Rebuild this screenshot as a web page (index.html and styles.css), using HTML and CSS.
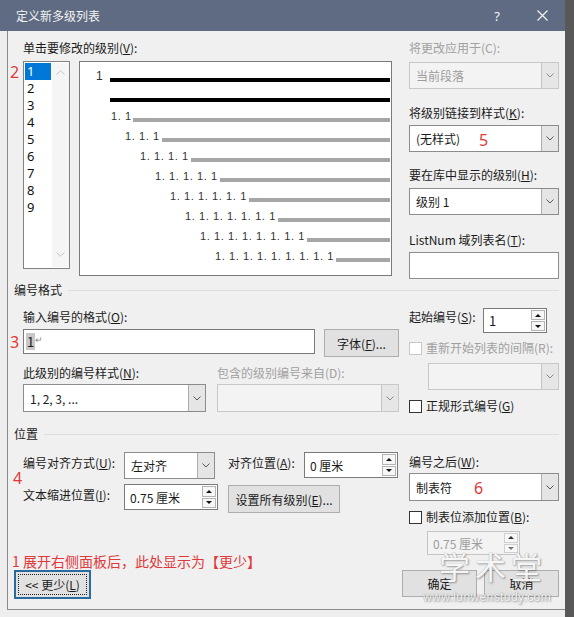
FILE: index.html
```html
<!DOCTYPE html>
<html lang="zh">
<head>
<meta charset="utf-8">
<title>定义新多级列表</title>
<link rel="stylesheet" href="styles.css">
</head>
<body>
<div class="screen">
  <div class="dialog">
    <div class="titlebar">
      <span class="title">定义新多级列表</span>
      <span class="help">?</span>
      <span class="close"><svg width="11" height="11" viewBox="0 0 11 11"><path d="M0.5 0.5 L10.5 10.5 M10.5 0.5 L0.5 10.5" stroke="#f4f4f4" stroke-width="1.2" fill="none"/></svg></span>
    </div>
    <div class="body">
      <div class="cols top">
        <div class="lcol">
          <div class="lbl">单击要修改的级别(<u>V</u>):</div>
          <div class="toprow">
            <div class="levels">
              <div class="items">
                <div class="item sel-item">1</div>
                <div class="item">2</div>
                <div class="item">3</div>
                <div class="item">4</div>
                <div class="item">5</div>
                <div class="item">6</div>
                <div class="item">7</div>
                <div class="item">8</div>
                <div class="item">9</div>
              </div>
              <div class="vscroll">
                <svg width="9" height="5" viewBox="0 0 9 5"><path d="M0.5 4.5 L4.5 0.8 L8.5 4.5" stroke="#c4c4c4" fill="none"/></svg>
                <svg width="9" height="5" viewBox="0 0 9 5"><path d="M0.5 0.5 L4.5 4.2 L8.5 0.5" stroke="#c4c4c4" fill="none"/></svg>
              </div>
            </div>
            <div class="preview">
              <div class="pr l1"><span class="pt">1</span><span class="bar k"></span></div>
              <div class="pr l1b"><span class="bar k"></span></div>
              <div class="pr l2"><span class="pt">1. 1</span><span class="bar"></span></div>
              <div class="pr l3"><span class="pt">1. 1. 1</span><span class="bar"></span></div>
              <div class="pr l4"><span class="pt">1. 1. 1. 1</span><span class="bar"></span></div>
              <div class="pr l5"><span class="pt">1. 1. 1. 1. 1</span><span class="bar"></span></div>
              <div class="pr l6"><span class="pt">1. 1. 1. 1. 1. 1</span><span class="bar"></span></div>
              <div class="pr l7"><span class="pt">1. 1. 1. 1. 1. 1. 1</span><span class="bar"></span></div>
              <div class="pr l8"><span class="pt">1. 1. 1. 1. 1. 1. 1. 1</span><span class="bar"></span></div>
              <div class="pr l9"><span class="pt">1. 1. 1. 1. 1. 1. 1. 1. 1</span><span class="bar"></span></div>
            </div>
          </div>
        </div>
        <div class="rcol">
          <div class="lbl dis">将更改应用于(C):</div>
          <div class="sel dis mt6"><span class="v">当前段落</span><span class="dd"><svg width="8" height="5" viewBox="0 0 8 5"><path d="M0.5 0.5 L4 4 L7.5 0.5" stroke="#8a8a8a" fill="none"/></svg></span></div>
          <div class="lbl mt16">将级别链接到样式(<u>K</u>):</div>
          <div class="sel mt4"><span class="v">(无样式)</span><span class="dd"><svg width="8" height="5" viewBox="0 0 8 5"><path d="M0.5 0.5 L4 4 L7.5 0.5" stroke="#555" fill="none"/></svg></span></div>
          <div class="lbl mt15">要在库中显示的级别(<u>H</u>):</div>
          <div class="sel mt5"><span class="v">级别 1</span><span class="dd"><svg width="8" height="5" viewBox="0 0 8 5"><path d="M0.5 0.5 L4 4 L7.5 0.5" stroke="#555" fill="none"/></svg></span></div>
          <div class="lbl mt17">ListNum 域列表名(<u>T</u>):</div>
          <div class="textbox mt4"></div>
        </div>
      </div>

      <div class="section s1"><span class="stitle">编号格式</span><span class="sline"></span></div>

      <div class="cols">
        <div class="lcol">
          <div class="lbl mt11">输入编号的格式(<u>O</u>):</div>
          <div class="fmt">
            <div class="fin"><span class="hl">1</span><span class="ret">↵</span></div>
            <div class="btn fontbtn">字体(<u>F</u>)...</div>
          </div>
          <div class="lbl mt8 lrow">
            <span class="w193">此级别的编号样式(<u>N</u>):</span>
            <span class="dis">包含的级别编号来自(D):</span>
          </div>
          <div class="selrow">
            <div class="sel h28 w183"><span class="v">1, 2, 3, ...</span><span class="dd"><svg width="8" height="5" viewBox="0 0 8 5"><path d="M0.5 0.5 L4 4 L7.5 0.5" stroke="#555" fill="none"/></svg></span></div>
            <div class="sel dis h28 w182"><span class="v"></span><span class="dd"><svg width="8" height="5" viewBox="0 0 8 5"><path d="M0.5 0.5 L4 4 L7.5 0.5" stroke="#8a8a8a" fill="none"/></svg></span></div>
          </div>
        </div>
        <div class="rcol">
          <div class="startrow">
            <span class="startlbl">起始编号(<u>S</u>):</span>
            <div class="spin w64 h25"><span class="v big">1</span><span class="sb"><i class="up"></i><i class="dn"></i></span></div>
          </div>
          <div class="chk mt7"><span class="cb dis"></span><span class="dis">重新开始列表的间隔(R):</span></div>
          <div class="sel dis mt7 restart"><span class="v"></span><span class="dd"><svg width="8" height="5" viewBox="0 0 8 5"><path d="M0.5 0.5 L4 4 L7.5 0.5" stroke="#8a8a8a" fill="none"/></svg></span></div>
          <div class="chk mt8"><span class="cb"></span><span>正规形式编号(<u>G</u>)</span></div>
        </div>
      </div>

      <div class="section s2"><span class="stitle">位置</span><span class="sline"></span></div>

      <div class="cols">
        <div class="lcol">
          <div class="posrow mt10">
            <span class="plbl">编号对齐方式(<u>U</u>):</span>
            <div class="sel w91"><span class="v">左对齐</span><span class="dd"><svg width="8" height="5" viewBox="0 0 8 5"><path d="M0.5 0.5 L4 4 L7.5 0.5" stroke="#555" fill="none"/></svg></span></div>
            <span class="plbl2">对齐位置(<u>A</u>):</span>
            <div class="spin w94 h26"><span class="v">0 厘米</span><span class="sb"><i class="up"></i><i class="dn"></i></span></div>
          </div>
          <div class="posrow mt5">
            <span class="plbl">文本缩进位置(<u>I</u>):</span>
            <div class="spin w94 h26"><span class="v">0.75 厘米</span><span class="sb"><i class="up"></i><i class="dn"></i></span></div>
            <div class="btn allbtn">设置所有级别(<u>E</u>)...</div>
          </div>
        </div>
        <div class="rcol">
          <div class="lbl mt12">编号之后(<u>W</u>):</div>
          <div class="sel h28 mt3"><span class="v">制表符</span><span class="dd"><svg width="8" height="5" viewBox="0 0 8 5"><path d="M0.5 0.5 L4 4 L7.5 0.5" stroke="#555" fill="none"/></svg></span></div>
          <div class="chk mt8"><span class="cb"></span><span>制表位添加位置(<u>B</u>):</span></div>
          <div class="spin dis tabpos mt6"><span class="v">0.75 厘米</span><span class="sb"><i class="up"></i><i class="dn"></i></span></div>
        </div>
      </div>

      <div class="note">1 展开右侧面板后，此处显示为【更少】</div>
      <div class="foot">
        <div class="btn less">&lt;&lt; 更少(<u>L</u>)</div>
        <div class="okc">
          <div class="btn dlgbtn">确定</div>
          <div class="btn dlgbtn">取消</div>
        </div>
      </div>
    </div>

    <span class="ann a2">2</span>
    <span class="ann a3">3</span>
    <span class="ann a4">4</span>
    <span class="ann a5">5</span>
    <span class="ann a6">6</span>
    <div class="wm">
      <div class="wm1">学术堂</div>
      <div class="wm2">www.lunwenstudy.com</div>
    </div>
  </div>
  <div class="edge"></div>
</div>
</body>
</html>
```

FILE: styles.css
```css
* { box-sizing: border-box; }
html, body { margin: 0; padding: 0; }
body {
  background: #eeeeee;
  font-family: "Noto Sans CJK SC", "Noto Sans", sans-serif;
  font-size: 12px;
  color: #1a1a1a;
}
u { text-decoration: underline; text-underline-offset: 1px; }

.screen { display: flex; width: 574px; height: 617px; overflow: hidden; }
.dialog { position: relative; width: 565px; height: 617px; }
.edge { width: 9px; height: 617px; background: #585858; }

.titlebar {
  height: 31px;
  background: #5e6b82;
  color: #f4f4f4;
  display: flex;
  align-items: center;
  padding-left: 16px;
}
.title { flex: 1; font-size: 12px; }
.help { font-family: "Noto Sans", sans-serif; font-size: 13px; margin-right: 37px; }
.close { display: flex; margin-right: 17px; }

.body {
  margin-left: 7px;
  height: 579px;
  border-left: 1px solid #8a8a8a;
  border-bottom: 1px solid #8a8a8a;
  background: #f0f0f0;
  padding: 0 6px;
}

.cols { display: flex; }
.top { padding-top: 9px; }
.lcol { margin-left: 9px; width: 376px; flex: none; }
.rcol { margin-left: 10px; width: 150px; flex: none; }

.lbl { height: 16px; line-height: 16px; white-space: nowrap; }
.dis { color: #a0a0a0; }

.mt3 { margin-top: 3px; }
.mt4 { margin-top: 4px; }
.mt5 { margin-top: 5px; }
.mt6 { margin-top: 6px; }
.mt7 { margin-top: 7px; }
.mt8 { margin-top: 8px; }
.mt10 { margin-top: 10px; }
.mt11 { margin-top: 11px; }
.mt12 { margin-top: 12px; }
.mt15 { margin-top: 15px; }
.mt16 { margin-top: 16px; }
.mt17 { margin-top: 17px; }

/* level list + preview */
.toprow { display: flex; margin-top: 5px; align-items: flex-start; }
.levels {
  width: 47px;
  height: 208px;
  border: 1px solid #828282;
  background: #fff;
  display: flex;
  padding: 1px 0 1px 1px;
}
.items { width: 26px; }
.item {
  height: 17px;
  line-height: 17px;
  padding-left: 2px;
  font-family: "Noto Sans", sans-serif;
  font-size: 13px;
  color: #111;
}
.sel-item { background: #0078d7; color: #fff; }
.vscroll {
  width: 17px;
  margin-left: 1px;
  background: #f5f5f5;
  display: flex;
  flex-direction: column;
  justify-content: space-between;
  align-items: center;
  padding: 7px 0 10px;
}

.preview {
  margin-left: 9px;
  width: 313px;
  height: 215px;
  border: 1px solid #7a7a7a;
  background: #fff;
  padding: 8px 1px 0 0;
  display: flex;
  flex-direction: column;
  gap: 8px;
}
.pr { display: flex; align-items: flex-end; height: 12px; }
.pt {
  flex: none;
  font-family: "Liberation Sans", sans-serif;
  font-size: 11px;
  line-height: 12px;
  color: #333;
  letter-spacing: 0.6px;
  white-space: nowrap;
}
.bar { flex: 1; height: 4px; background: #a6a6a6; }
.bar.k { background: #000; }
.l1 { padding-left: 16px; }
.l1 .pt { width: 14px; font-size: 12px; }
.l1b { padding-left: 30px; }
.l2 { padding-left: 31px; } .l2 .pt { width: 22px; }
.l3 { padding-left: 45px; } .l3 .pt { width: 37px; }
.l4 { padding-left: 60px; } .l4 .pt { width: 51px; }
.l5 { padding-left: 75px; } .l5 .pt { width: 65px; }
.l6 { padding-left: 90px; } .l6 .pt { width: 79px; }
.l7 { padding-left: 105px; } .l7 .pt { width: 93px; }
.l8 { padding-left: 120px; } .l8 .pt { width: 107px; }
.l9 { padding-left: 135px; } .l9 .pt { width: 121px; }

/* controls */
.sel {
  display: flex;
  height: 27px;
  border: 1px solid #8c8c8c;
  background: #fff;
}
.sel .v { flex: 1; padding-left: 6px; display: flex; align-items: center; white-space: nowrap; }
.sel .dd {
  width: 17px;
  background: #e5e5e5;
  border-left: 1px solid #adadad;
  display: flex;
  align-items: center;
  justify-content: center;
}
.sel.dis { background: #f3f3f3; border-color: #c8c8c8; color: #9d9d9d; }
.sel.dis .dd { background: #e6e6e6; border-left-color: #c4c4c4; }
.h28 { height: 28px; }
.w183 { width: 183px; }
.w182 { width: 182px; }
.w91 { width: 91px; }
.w94 { width: 94px; }
.w64 { width: 64px; }
.h25 { height: 25px; }
.h26 { height: 26px; }

.textbox { height: 27px; border: 1px solid #8c8c8c; background: #fff; }

.btn {
  height: 28px;
  border: 1px solid #adadad;
  background: #e1e1e1;
  display: flex;
  align-items: center;
  justify-content: center;
  white-space: nowrap;
}

.spin { display: flex; border: 1px solid #7a7a7a; background: #fff; }
.spin .v { flex: 1; padding-left: 5px; display: flex; align-items: center; white-space: nowrap; }
.spin .v.big { font-size: 13px; }
.sb { width: 15px; display: flex; flex-direction: column; padding: 1px 1px 1px 0; gap: 1px; }
.sb i {
  flex: 1;
  border: 1px solid #b4b4b4;
  background: #f7f7f7;
  display: flex;
  align-items: center;
  justify-content: center;
}
.sb i::after { content: ""; width: 0; height: 0; border-left: 3px solid transparent; border-right: 3px solid transparent; }
.sb i.up::after { border-bottom: 3px solid #111; }
.sb i.dn::after { border-top: 3px solid #111; }
.spin.dis { border-color: #c4c4c4; background: #f3f3f3; color: #9d9d9d; }
.spin.dis .sb i { border-color: #cfcfcf; }
.spin.dis .sb i.up::after { border-bottom-color: #333; }
.spin.dis .sb i.dn::after { border-top-color: #777; }

.cb { width: 13px; height: 13px; border: 1px solid #333; background: #fff; flex: none; }
.cb.dis { border-color: #c8c8c8; }
.chk { display: flex; align-items: center; gap: 4px; height: 16px; line-height: 16px; white-space: nowrap; }

/* sections */
.section { display: flex; align-items: center; height: 16px; line-height: 16px; }
.s1 { margin-top: 3px; }
.s2 { margin-top: 12px; }
.stitle { flex: none; }
.sline { flex: 1; height: 1px; background: #dcdcdc; margin-left: 6px; }

/* row 2 */
.fmt { display: flex; gap: 9px; align-items: flex-start; margin-top: 4px; }
.fin {
  width: 292px;
  height: 25px;
  border: 1px solid #7a7a7a;
  background: #fff;
  display: flex;
  align-items: center;
  padding-left: 2px;
}
.hl { background: #c8c8c8; font-size: 13px; line-height: 17px; padding: 0 1px; }
.ret { font-size: 9px; color: #888; margin-top: -4px; }
.fontbtn { width: 75px; }
.lrow { display: flex; }
.w193 { width: 194px; flex: none; }
.selrow { display: flex; gap: 11px; margin-top: 3px; }

.startrow { display: flex; align-items: flex-start; margin-top: 10px; }
.startlbl { width: 74px; line-height: 16px; margin-top: 1px; white-space: nowrap; }
.restart { margin-left: 19px; width: 131px; }

/* row 3 */
.posrow { display: flex; align-items: flex-start; }
.plbl { width: 101px; padding-top: 3px; line-height: 16px; white-space: nowrap; flex: none; }
.plbl2 { width: 76px; margin-left: 13px; padding-top: 3px; line-height: 16px; white-space: nowrap; flex: none; }
.allbtn { margin-left: 10px; width: 112px; margin-top: 1px; }
.tabpos { margin-left: 18px; width: 93px; height: 24px; }

/* footer */
.note {
  margin-top: -1px;
  margin-left: -2px;
  height: 14px;
  font-size: 14px;
  line-height: 14px;
  color: #e0383b;
  white-space: nowrap;
}
.foot { display: flex; align-items: flex-start; margin-top: 2px; }
.less {
  width: 77px;
  height: 29px;
  border: 2px solid #2a6a9e;
  position: relative;
}
.less::after {
  content: "";
  position: absolute;
  left: 2px; top: 2px; right: 2px; bottom: 2px;
  border: 1px dotted #222;
}
.okc { margin-left: auto; display: flex; gap: 7px; }
.dlgbtn { width: 75px; height: 27px; }

/* annotations */
.ann {
  position: absolute;
  font-family: "Noto Sans", sans-serif;
  font-size: 16px;
  line-height: 16px;
  color: #e0383b;
}
.a2 { left: 10px; top: 64px; }
.a3 { left: 10px; top: 334px; }
.a4 { left: 13px; top: 470px; }
.a5 { left: 479px; top: 132px; }
.a6 { left: 474px; top: 480px; }

.wm { position: absolute; left: 423px; top: 548px; width: 140px; pointer-events: none; }
.wm1 {
  text-align: center;
  font-size: 31px;
  line-height: 36px;
  letter-spacing: 5px;
  color: rgba(255, 255, 255, 0.92);
  text-shadow: 0 0 1px #999, 1px 1px 2px rgba(0, 0, 0, 0.35);
}
.wm2 {
  margin-top: 6px;
  font-family: "Liberation Sans", sans-serif;
  font-size: 12px;
  line-height: 15px;
  letter-spacing: 0.4px;
  color: rgba(255, 255, 255, 0.92);
  text-shadow: 0 0 1px #888, 1px 1px 2px rgba(0, 0, 0, 0.35);
  white-space: nowrap;
}
```
